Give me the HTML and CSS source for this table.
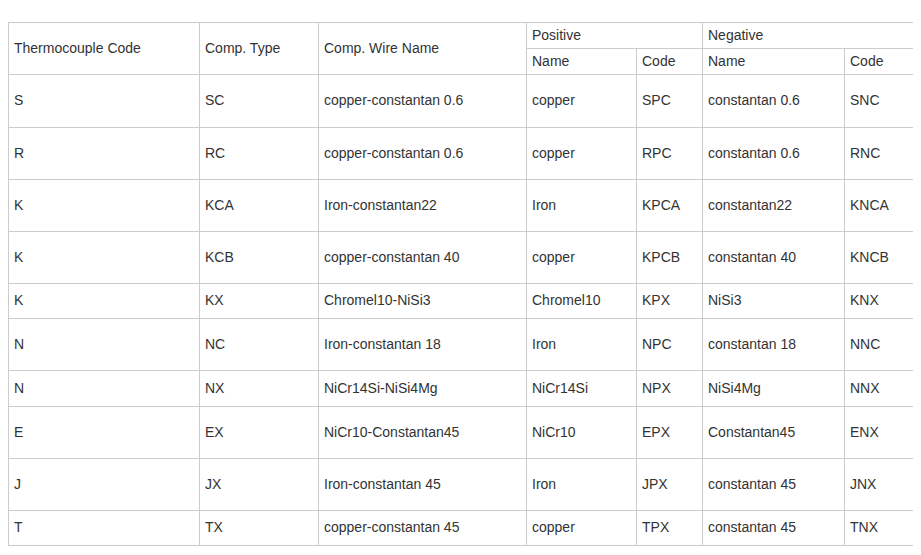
FILE: index.html
```html
<!DOCTYPE html>
<html>
<head>
<meta charset="utf-8">
<link rel="stylesheet" href="styles.css">
</head>
<body>
<table class="tc">
  <colgroup>
    <col class="c1"><col class="c2"><col class="c3"><col class="c4"><col class="c5"><col class="c6"><col class="c7">
  </colgroup>
  <thead>
    <tr class="h">
      <th rowspan="2">Thermocouple Code</th>
      <th rowspan="2">Comp. Type</th>
      <th rowspan="2">Comp. Wire Name</th>
      <th colspan="2">Positive</th>
      <th colspan="2">Negative</th>
    </tr>
    <tr class="h">
      <th>Name</th><th>Code</th><th>Name</th><th>Code</th>
    </tr>
  </thead>
  <tbody>
    <tr class="tall first"><td>S</td><td>SC</td><td>copper-constantan 0.6</td><td>copper</td><td>SPC</td><td>constantan 0.6</td><td>SNC</td></tr>
    <tr class="tall"><td>R</td><td>RC</td><td>copper-constantan 0.6</td><td>copper</td><td>RPC</td><td>constantan 0.6</td><td>RNC</td></tr>
    <tr class="tall"><td>K</td><td>KCA</td><td>Iron-constantan22</td><td>Iron</td><td>KPCA</td><td>constantan22</td><td>KNCA</td></tr>
    <tr class="tall"><td>K</td><td>KCB</td><td>copper-constantan 40</td><td>copper</td><td>KPCB</td><td>constantan 40</td><td>KNCB</td></tr>
    <tr class="short"><td>K</td><td>KX</td><td>Chromel10-NiSi3</td><td>Chromel10</td><td>KPX</td><td>NiSi3</td><td>KNX</td></tr>
    <tr class="tall"><td>N</td><td>NC</td><td>Iron-constantan 18</td><td>Iron</td><td>NPC</td><td>constantan 18</td><td>NNC</td></tr>
    <tr class="short wide"><td>N</td><td>NX</td><td>NiCr14Si-NiSi4Mg</td><td>NiCr14Si</td><td>NPX</td><td>NiSi4Mg</td><td>NNX</td></tr>
    <tr class="tall"><td>E</td><td>EX</td><td>NiCr10-Constantan45</td><td>NiCr10</td><td>EPX</td><td>Constantan45</td><td>ENX</td></tr>
    <tr class="tall"><td>J</td><td>JX</td><td>Iron-constantan 45</td><td>Iron</td><td>JPX</td><td>constantan 45</td><td>JNX</td></tr>
    <tr class="short"><td>T</td><td>TX</td><td>copper-constantan 45</td><td>copper</td><td>TPX</td><td>constantan 45</td><td>TNX</td></tr>
  </tbody>
</table>
</body>
</html>
```

FILE: styles.css
```css
html, body {
  background: #fff;
}
body {
  margin: 8px;
  font-family: "Liberation Sans", Arial, sans-serif;
  font-size: 14px;
  color: #333;
}
.tc {
  margin-top: 14px;
  width: 906px;
  border-collapse: collapse;
  table-layout: fixed;
}
.c1 { width: 191px; }
.c2 { width: 119px; }
.c3 { width: 208px; }
.c4 { width: 110px; }
.c5 { width: 66px; }
.c6 { width: 142px; }
.c7 { width: 70px; }
.tc th, .tc td {
  border: 1px solid #ccc;
  padding: 0 5px 2px;
  text-align: left;
  font-weight: normal;
  vertical-align: middle;
  line-height: 16px;
}
.tc tr.h { height: 26px; }
.tc tr.tall { height: 52px; }
.tc tr.tall.first { height: 53px; }
.tc tr.short { height: 35px; }
.tc tr.short.wide { height: 36px; }
```
